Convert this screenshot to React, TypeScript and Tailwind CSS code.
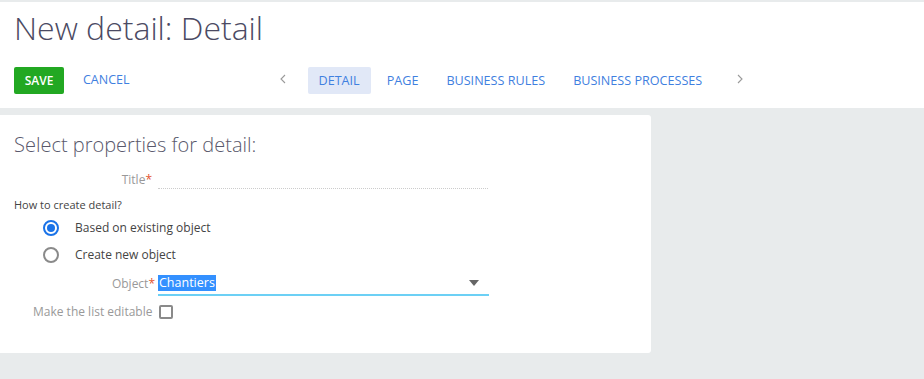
import React from 'react';

const tabs = ['DETAIL', 'PAGE', 'BUSINESS RULES', 'BUSINESS PROCESSES'];

const Radio: React.FC<{ checked?: boolean; label: string }> = ({ checked, label }) => (
  <div className="flex items-center h-[27px] pl-[43px]">
    <span
      className={`w-[16px] h-[16px] rounded-full border-2 flex items-center justify-center ${
        checked ? 'border-[#1a73e8]' : 'border-[#8a8a8a]'
      }`}
    >
      {checked && <span className="w-[8px] h-[8px] rounded-full bg-[#1a73e8]" />}
    </span>
    <span className="ml-[16px] text-[12px] text-[#444]">{label}</span>
  </div>
);

const Chevron: React.FC<{ dir: 'left' | 'right' }> = ({ dir }) => (
  <svg width="6" height="10" viewBox="0 0 6 10" className="-mt-[4px]">
    <path
      d={dir === 'left' ? 'M5 1 L1 5 L5 9' : 'M1 1 L5 5 L1 9'}
      fill="none"
      stroke="#9a9a9a"
      strokeWidth="1.1"
    />
  </svg>
);

export default function App() {
  return (
    <div
      className="w-[924px] h-[379px] bg-[#e8ebec] pt-[2px] overflow-hidden"
      style={{ fontFamily: '"Open Sans", "Liberation Sans", sans-serif' }}
    >
      <header className="bg-white h-[106px] px-[14px]">
        <h1 className="pt-[6px] text-[32px] font-light leading-[40px] text-[#4b4a63]">New detail: Detail</h1>
        <div className="flex items-center mt-[19px] h-[27px]">
          <button className="h-[27px] w-[50px] rounded-[2px] bg-[#22a822] text-white text-[12px] font-semibold">
            SAVE
          </button>
          <button className="ml-[19px] text-[12.5px] text-[#3f80e0]">CANCEL</button>
          <span className="ml-[150px] flex">
            <Chevron dir="left" />
          </span>
          <div className="ml-[22px] flex items-center">
            {tabs.map((t, i) => (
              <span
                key={t}
                className={`h-[27px] flex items-center pt-[2px] px-[11px] text-[12.6px] text-[#3f80e0] rounded-[2px] ${
                  i === 0 ? 'bg-[#e1e8f7]' : ''
                } ${i > 1 ? 'ml-[6px]' : i === 1 ? 'ml-[5px]' : ''}`}
              >
                {t}
              </span>
            ))}
          </div>
          <span className="ml-[24px] flex">
            <Chevron dir="right" />
          </span>
        </div>
      </header>
      <div className="mt-[7px] w-[651px] h-[238px] bg-white rounded-r-[3px]">
        <h2 className="pl-[14px] pt-[17px] text-[20px] font-light leading-[26px] text-[#59586b]">
          Select properties for detail:
        </h2>
        <div className="flex items-end mt-[13px] h-[18px]">
          <span className="w-[152px] text-right text-[12px] text-[#999]">
            Title<span className="text-[#e4532f]">*</span>
          </span>
          <span className="ml-[6px] w-[330px] border-b border-dotted border-[#ccc] h-[18px]" />
        </div>
        <p className="pl-[14px] mt-[8px] text-[11px] text-[#444]">How to create detail?</p>
        <div className="mt-[1px]">
          <Radio checked label="Based on existing object" />
          <Radio label="Create new object" />
        </div>
        <div className="flex items-end h-[23px] mt-[4px]">
          <span className="w-[155px] text-right text-[12px] text-[#999] pb-[3px]">
            Object<span className="text-[#e4532f]">*</span>
          </span>
          <div className="ml-[3px] w-[331px] h-[23px] border-b-2 border-[#6cd0f5] flex items-center justify-between">
            <span className="bg-[#3390ff] text-white text-[12.5px] leading-[16px] px-[1px]">Chantiers</span>
            <svg width="10" height="6" viewBox="0 0 10 6" className="mr-[10px]">
              <path d="M0 0 L10 0 L5 6 Z" fill="#666" />
            </svg>
          </div>
        </div>
        <div className="flex items-center mt-[7px]">
          <span className="pl-[33px] text-[12px] text-[#999]">Make the list editable</span>
          <span className="ml-[7px] w-[14px] h-[14px] border-2 border-[#8a8a8a] rounded-[2px]" />
        </div>
      </div>
    </div>
  );
}
